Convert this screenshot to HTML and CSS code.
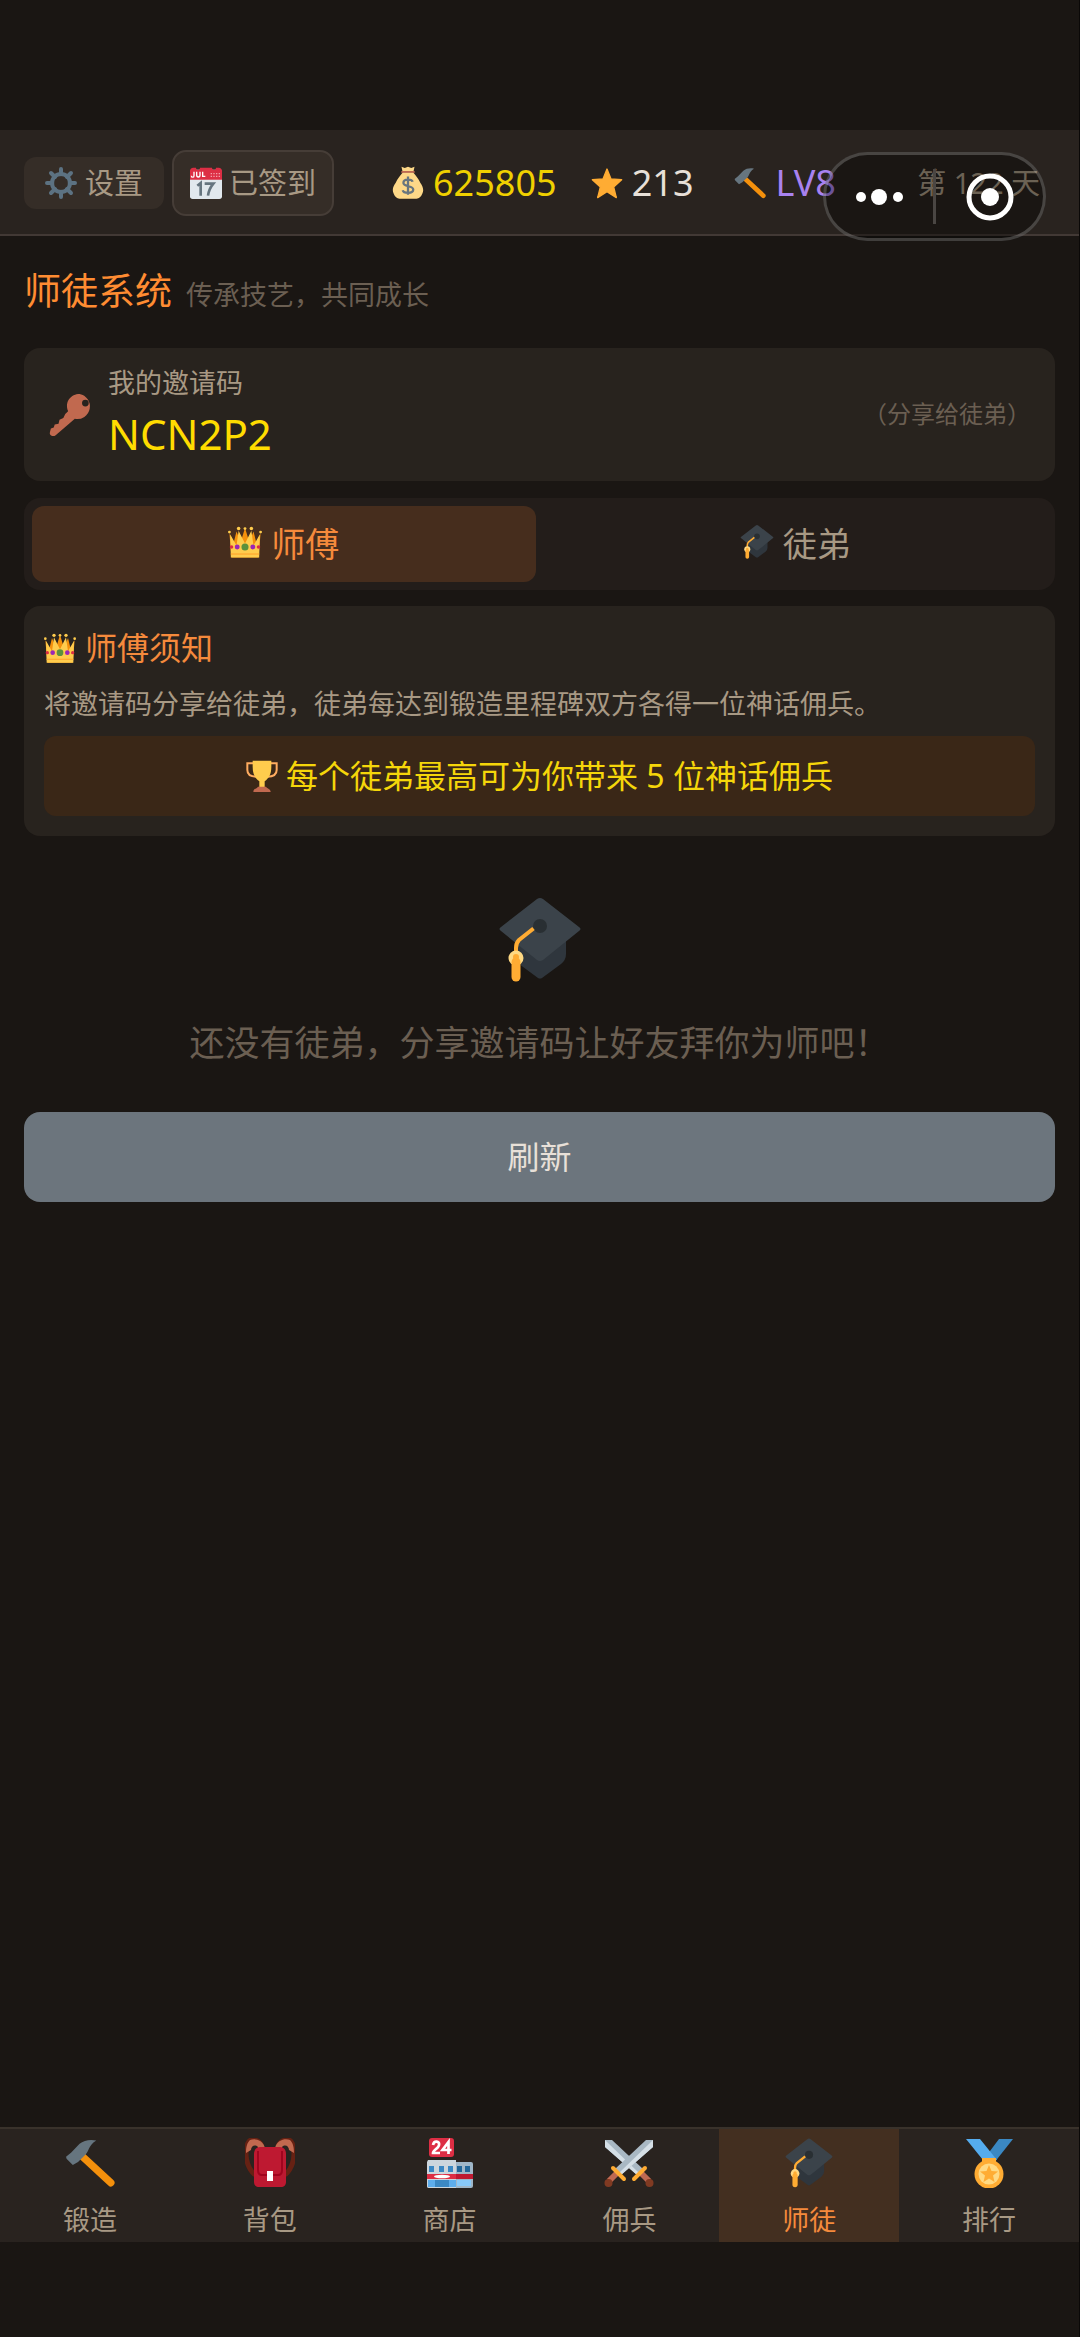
FILE: index.html
```html
<!DOCTYPE html>
<html lang="zh-CN">
<head>
<meta charset="utf-8">
<meta name="viewport" content="width=device-width, initial-scale=1">
<title>师徒系统</title>
<link rel="stylesheet" href="styles.css">
</head>
<body>
<svg class="sprite" aria-hidden="true">
  <symbol id="gear" viewBox="0 0 48 48">
    <g stroke="#5c7282" stroke-width="6" stroke-linecap="round">
      <path d="M24 3v8M24 37v8M3 24h8M37 24h8M9 9l6 6M33 33l6 6M39 9l-6 6M15 33l-6 6"/>
    </g>
    <circle cx="24" cy="24" r="13.500" fill="none" stroke="#5c7282" stroke-width="6"/>
  </symbol>
  <symbol id="calendar" viewBox="0 0 48 48">
    <rect x="0" y="4" width="48" height="44" rx="4" fill="#e1e8ed"/>
    <path d="M0 19V6c0-3 2-5 5-5h4c0 4 6 4 6 0h18c0 4 6 4 6 0h4c3 0 5 2 5 5v13z" fill="#dd2e44"/>
    <path d="M6 7v6c0 3-4 3-4 0M10 7v5c0 4 5 4 5 0V7M19 7v7h4" fill="none" stroke="#fff" stroke-width="2"/>
    <path d="M31 10h14M31 14h14" stroke="#f4a0aa" stroke-width="2" stroke-dasharray="2 2"/>
    <path d="M11 28l5-4v19M22 25h13c-5 6-7 11-8 18" fill="none" stroke="#66757f" stroke-width="4"/>
  </symbol>
  <symbol id="bag" viewBox="0 0 48 52">
    <path d="M14 1l5 2 5-2 5 2 5-2-2 9H16z" fill="#fdd888"/>
    <path d="M16 10h16c3 4 8 9 11 16 3 4 6 11 3 16-2 5-5 8-9 8H11c-4 0-7-3-9-8-3-6 0-12 3-16 3-7 8-12 11-16z" fill="#fdd888"/>
    <path d="M15 9h18" stroke="#bf6952" stroke-width="3" stroke-linecap="round"/>
    <path d="M31 24c-1-4-14-5-14 2 0 6 15 4 15 10 0 7-15 6-16 1M24 16v28" fill="none" stroke="#67757f" stroke-width="3.500"/>
  </symbol>
  <symbol id="star" viewBox="0 0 48 48">
    <path d="M24 3l6 15 16 1-12 11 4 16-14-9-14 9 4-16L2 19l16-1z" fill="#ffac33" stroke="#ffac33" stroke-width="2" stroke-linejoin="round"/>
  </symbol>
  <symbol id="hammer" viewBox="0 0 48 48">
    <path d="M17 18l27 25" stroke="#f4900c" stroke-width="7" stroke-linecap="round"/>
    <path d="M30 2.500C25 1 18 2 14 5.500L6 14l-5 4 .5 2 6 6 5-3 7-7c4-3 2-8 10.500-13.500z" fill="#66757f"/>
  </symbol>
  <symbol id="key" viewBox="0 0 48 48">
    <path fill-rule="evenodd" d="M33 2a13 13 0 1 1-5 26L8 45c-2 2-7 1-6-3l1-4 3-1 1-3 4-1 1-4 4-2 2-4 3-3C17 10 24 2 33 2zm6 6a3.500 3.500 0 1 0 0 7 3.500 3.500 0 0 0 0-7z" fill="#c1694f"/>
  </symbol>
  <symbol id="crown" viewBox="0 0 48 48">
    <path d="M5 46L2 12l6 13 4-16 6 15 6-20 6 20 6-15 4 16 6-13-3 34z" fill="#f4900c"/>
    <path d="M4 46L3 13l9 16 3-21 9 18 9-18 3 21 9-16-1 33z" fill="#ffcc4d"/>
    <g fill="#ffcc4d"><circle cx="2" cy="10" r="2"/><circle cx="15" cy="5" r="2.500"/><circle cx="24" cy="5" r="2"/><circle cx="33" cy="5" r="2.500"/><circle cx="46" cy="10" r="2"/></g>
    <path d="M4 41h40" stroke="#ffac33" stroke-width="2"/>
    <circle cx="24" cy="31" r="5" fill="#5c913b"/>
    <circle cx="13" cy="31" r="3.500" fill="#9b26b6"/><circle cx="35" cy="31" r="3.500" fill="#9b26b6"/>
    <circle cx="5" cy="31" r="2.500" fill="#dd2e44"/><circle cx="43" cy="31" r="2.500" fill="#dd2e44"/>
  </symbol>
  <symbol id="cap" viewBox="0 0 84 86">
    <path d="M17 40v24l23 17q2 1 4 0l19-14q5-4 5-10V40z" fill="#2f363d"/>
    <path d="M39 2q3-2 6 0l36 28q3 2 0 4L45 63q-3 2-6 0L3 34q-3-2 0-4z" fill="#3b434a"/>
    <circle cx="42" cy="29" r="7" fill="#292f33"/>
    <path d="M35.500 31.500L21 43q-3 3-3 8v10" fill="none" stroke="#ffac33" stroke-width="4"/>
    <circle cx="18" cy="61" r="7.500" fill="#ffd983"/>
    <path d="M18 65v15" stroke="#ffac33" stroke-width="9" stroke-linecap="round"/>
    <circle cx="18" cy="60" r="3" fill="#ffac33"/>
  </symbol>
  <symbol id="trophy" viewBox="0 0 48 48">
    <path d="M11 5H2v10c0 7 4 10 14 10M37 5h9v10c0 7-4 10-14 10" fill="none" stroke="#ffac60" stroke-width="3"/>
    <path d="M10 1h28v9c0 12-4 17-10 22v9h-8v-9C14 27 10 22 10 10z" fill="#ffcc4d"/>
    <path d="M18 40h12c2 3 7 3 7 8H11c0-5 5-5 7-8z" fill="#c1694f"/>
  </symbol>
  <symbol id="backpack" viewBox="0 0 50 50">
    <path d="M17 8C14 2 6-1 3 5c-4 10-2 24 7 32M33 8c3-6 11-9 14-3 4 10 2 24-7 32" fill="none" stroke="#662113" stroke-width="5"/>
    <path d="M20 10C18 2 10 0 5 2 2 5 1 9 1 15l5-3c0-4 4-6 7-3v5M30 10c2-8 10-10 15-8 3 3 4 7 4 13l-5-3c0-4-4-6-7-3v5" fill="#c1694f"/>
    <path d="M15 9h20c4 0 6 3 6 7v28c0 3-2 5-5 5H14c-3 0-5-2-5-5V16c0-4 2-7 6-7z" fill="#be1931"/>
    <path d="M13 13v19c0 3 1 5 4 5h16c3 0 4-2 4-5V13" fill="none" stroke="#a0041e" stroke-width="2"/>
    <path d="M22 33h6v10h-6z" fill="#fff"/>
  </symbol>
  <symbol id="store" viewBox="0 0 48 50">
    <rect x="3" y="0" width="25" height="19" rx="3" fill="#dd2e44"/>
    <path d="M7 7c1-5 7-4 6 0 0 3-6 5-6 8h7M22.500 16V4l-6 8h9" fill="none" stroke="#fff" stroke-width="2.700"/>
    <rect x="1" y="24" width="46" height="26" rx="2" fill="#9fb6c8"/>
    <path d="M2 22h28v28H3q-2 0-2-2V24z" fill="#ccd6dd"/>
    <path d="M3 28h5v6H3zM13 28h5v6h-5zM22 28h5v6h-5z" fill="#3b88c3"/><path d="M31 28h5v6h-5zM39 28h5v6h-5z" fill="#226699"/>
    <path d="M1 36h29v5H1z" fill="#dd2e44"/><path d="M30 36h17v5H30z" fill="#be1931"/>
    <path d="M2 42h28v7H2z" fill="#5dadec"/><path d="M9 42h14v7H9z" fill="#3b88c3"/><path d="M31 42h14v6H31z" fill="#88c9f9"/>
    <ellipse cx="16" cy="38.500" rx="8" ry="1.800" fill="#fff"/>
  </symbol>
  <symbol id="swords" viewBox="0 0 50 50">
    <g id="blade">
      <path d="M1 2h7l31 29-6 6L1 9z" fill="#a9b8c3"/><path d="M1 2l34 33-2 2L1 9z" fill="#d5dfe6"/>
      <path d="M37 35l8 8" stroke="#bf6952" stroke-width="6"/>
      <path d="M41 30L30 41" stroke="#ffac33" stroke-width="4" stroke-linecap="round"/>
      <circle cx="45.500" cy="45" r="4" fill="#803a22"/>
    </g>
    <use href="#blade" transform="matrix(-1 0 0 1 50 0)"/>
  </symbol>
  <symbol id="medal" viewBox="0 0 48 50">
    <path d="M34 1h14L29 25l-7-8z" fill="#3b88c3"/>
    <path d="M1 1h14l17 21h-14z" fill="#55acee"/>
    <path d="M17 20h14v8H17z" fill="#ffac33"/>
    <circle cx="24" cy="36" r="14.500" fill="#ffac33"/><circle cx="24" cy="36" r="10.500" fill="#ffd983"/>
    <path d="M24 27l2.500 6 6.500.5-5 4 1.500 6.500-5.500-3.500-5.500 3.500 1.500-6.500-5-4 6.500-.5z" fill="#ffac33"/>
  </symbol>
</svg>

<div class="app">
  <header class="topbar">
    <div class="actions">
      <button class="btn-settings" type="button"><svg class="icon-sm"><use href="#gear"/></svg>设置</button>
      <button class="btn-checkin" type="button"><svg class="icon-sm"><use href="#calendar"/></svg>已签到</button>
    </div>
    <div class="stats">
      <span class="stat gold"><svg class="icon-sm"><use href="#bag"/></svg>625805</span>
      <span class="stat"><svg class="icon-sm"><use href="#star"/></svg>213</span>
      <span class="stat level"><svg class="icon-sm"><use href="#hammer"/></svg>LV8</span>
      <span class="day">第 122 天</span>
    </div>
  </header>

  <div class="capsule">
    <button type="button" aria-label="更多"><svg class="capsule-icon" viewBox="0 0 48 48" fill="#fff"><circle cx="5" cy="24" r="5"/><circle cx="23" cy="24" r="8"/><circle cx="42" cy="24" r="5"/></svg></button>
    <button type="button" aria-label="关闭"><svg class="capsule-icon" viewBox="0 0 48 48"><circle cx="24" cy="24" r="21" fill="none" stroke="#fff" stroke-width="5"/><circle cx="24" cy="24" r="9" fill="#fff"/></svg></button>
  </div>

  <main class="content">
    <div class="heading"><h1>师徒系统</h1><p>传承技艺，共同成长</p></div>

    <section class="invite">
      <svg class="icon-key"><use href="#key"/></svg>
      <div class="invite-body">
        <p class="invite-label">我的邀请码</p>
        <p class="invite-code">NCN2P2</p>
      </div>
      <p class="invite-hint">（分享给徒弟）</p>
    </section>

    <div class="tabs" role="tablist">
      <button class="tab active" type="button" role="tab" aria-selected="true"><svg class="icon-md"><use href="#crown"/></svg>师傅</button>
      <button class="tab" type="button" role="tab" aria-selected="false"><svg class="icon-md"><use href="#cap"/></svg>徒弟</button>
    </div>

    <section class="notice">
      <h2><svg class="icon-sm"><use href="#crown"/></svg>师傅须知</h2>
      <p class="notice-text">将邀请码分享给徒弟，徒弟每达到锻造里程碑双方各得一位神话佣兵。</p>
      <p class="banner"><svg class="icon-sm"><use href="#trophy"/></svg>每个徒弟最高可为你带来 5 位神话佣兵</p>
    </section>

    <section class="empty">
      <svg class="icon-xl"><use href="#cap"/></svg>
      <p>还没有徒弟，分享邀请码让好友拜你为师吧！</p>
    </section>

    <button class="refresh" type="button">刷新</button>
  </main>

  <nav class="tabbar">
    <a href="#forge"><svg class="icon-lg"><use href="#hammer"/></svg>锻造</a>
    <a href="#pack"><svg class="icon-lg"><use href="#backpack"/></svg>背包</a>
    <a href="#shop"><svg class="icon-lg"><use href="#store"/></svg>商店</a>
    <a href="#mercs"><svg class="icon-lg"><use href="#swords"/></svg>佣兵</a>
    <a class="active" href="#mentor" aria-current="page"><svg class="icon-lg"><use href="#cap"/></svg>师徒</a>
    <a href="#rank"><svg class="icon-lg"><use href="#medal"/></svg>排行</a>
  </nav>
</div>
</body>
</html>
```

FILE: styles.css
```css
* { box-sizing: border-box; margin: 0; padding: 0; }

body {
  background: #1a1613;
  color: #a89984;
  font-family: "Noto Sans", "Noto Sans CJK SC", sans-serif;
  font-size: 27px;
}

h1, h2 { font-weight: 400; }

button {
  border: 0;
  background: none;
  color: inherit;
  font: inherit;
}

.sprite { position: absolute; width: 0; height: 0; }

.icon-sm { width: 32px; height: 34px; flex: none; }
.icon-md { width: 34px; height: 36px; flex: none; }
.icon-key { width: 46px; height: 46px; flex: none; }
.icon-lg { width: 50px; height: 50px; }
.icon-xl { width: 84px; height: 86px; }

.app {
  position: relative;
  display: flex;
  flex-direction: column;
  min-height: 100vh;
  padding: 130px 0 95px;
  border-right: 1px solid #0a0807;
}

/* top bar */
.topbar {
  display: flex;
  align-items: center;
  gap: 58px;
  height: 106px;
  padding: 2px 36px 0 24px;
  background: #29231f;
  border-bottom: 2px solid #423935;
}

.actions { display: flex; align-items: center; gap: 8px; font-size: 29px; }

.btn-settings, .btn-checkin {
  display: flex;
  align-items: center;
  gap: 8px;
  background: #352d27;
  line-height: 40px;
}

.btn-settings { padding: 6px 21px; border-radius: 12px; }
.btn-checkin { padding: 11px 16px; gap: 7px; border: 2px solid #463d37; border-radius: 14px; }

.stats {
  flex: 1;
  display: grid;
  grid-template-columns: 199fr 144fr 183fr 126fr;
  align-items: center;
  white-space: nowrap;
  font-size: 36px;
  line-height: 48px;
}

.stat { display: flex; align-items: center; gap: 9px; color: #e8e0d8; }
.stat.gold { color: #f0d000; }
.stat.level { color: #a882f0; }
.day { font-size: 29px; }

/* floating window controls */
.capsule {
  position: absolute;
  top: 152px;
  right: 33px;
  display: flex;
  align-items: center;
  width: 223px;
  height: 89px;
  border: 3px solid rgba(255, 255, 255, 0.2);
  border-radius: 45px;
  background: rgba(0, 0, 0, 0.36);
}

.capsule button { flex: 1; height: 55px; }
.capsule button + button { border-left: 3px solid #4a4643; }
.capsule-icon { display: block; width: 48px; height: 48px; margin: 0 auto; }

/* page content */
.content { flex: 1; padding: 31px 24px; }

.heading { display: flex; align-items: baseline; gap: 14px; margin-bottom: 29px; line-height: 48px; }
.heading h1 { color: #ff8c32; font-size: 37px; }
.heading p { color: #6b5f52; }

.invite {
  display: flex;
  align-items: center;
  gap: 14px;
  padding: 19px 24px;
  border-radius: 16px;
  background: #28231e;
}

.invite-body { flex: 1; }
.invite-label { line-height: 32px; }
.invite-code { margin-top: 7px; color: #ffdc00; font-size: 42px; line-height: 56px; }
.invite-hint { padding-bottom: 4px; color: #6b5f52; font-size: 24px; }

.tabs {
  display: flex;
  gap: 8px;
  margin: 17px 0 16px;
  padding: 8px;
  border-radius: 16px;
  background: #231d1a;
}

.tab {
  flex: 1;
  display: flex;
  align-items: center;
  justify-content: center;
  gap: 9px;
  height: 76px;
  padding-bottom: 4px;
  border-radius: 12px;
  font-size: 34px;
}

.tab.active { background: #462d1d; color: #f58a3c; }

.notice { padding: 20px; border-radius: 16px; background: #28231e; }
.notice h2 { display: flex; align-items: center; gap: 9px; color: #f58a3c; font-size: 32px; line-height: 44px; }
.notice-text { margin: 14px 0 12px; line-height: 40px; }

.banner {
  display: flex;
  align-items: center;
  justify-content: center;
  gap: 8px;
  padding: 18px;
  border-radius: 12px;
  background: #3a2717;
  color: #f5d60a;
  font-size: 32px;
  line-height: 44px;
}

.empty {
  display: flex;
  flex-direction: column;
  align-items: center;
  gap: 36px;
  padding: 61px 0 45px;
  color: #6b5f52;
  font-size: 35px;
  line-height: 48px;
}

.refresh {
  display: block;
  width: 100%;
  height: 90px;
  padding-bottom: 4px;
  border-radius: 16px;
  background: #6c757d;
  color: #e8e0d8;
  font-size: 32px;
}

/* bottom navigation */
.tabbar {
  display: grid;
  grid-template-columns: repeat(6, 1fr);
  border-top: 2px solid #39322b;
  background: #29231f;
}

.tabbar a {
  display: flex;
  flex-direction: column;
  align-items: center;
  gap: 12px;
  padding: 9px 0 3px;
  color: inherit;
  line-height: 39px;
  text-decoration: none;
}

.tabbar a.active { background: #432f20; color: #f58a3c; }
```
